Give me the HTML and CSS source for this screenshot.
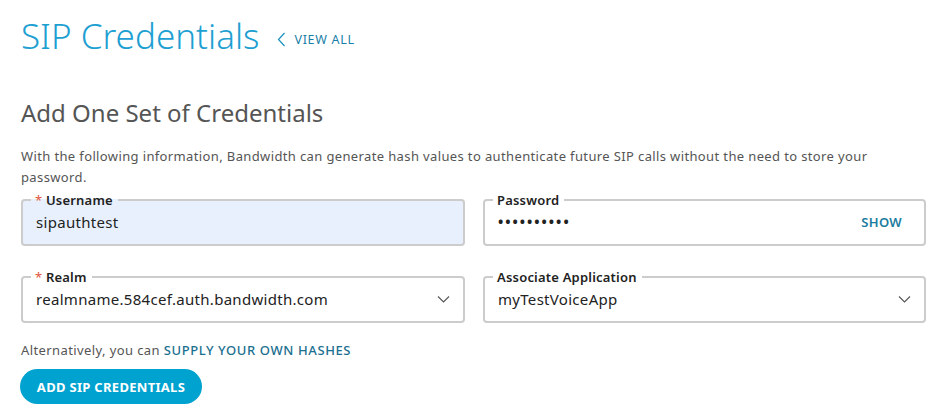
FILE: index.html
```html
<!DOCTYPE html>
<html>
<head>
<meta charset="utf-8">
<link rel="stylesheet" href="styles.css">
</head>
<body>
<div class="page">
  <header class="head">
    <h1 class="title">SIP Credentials</h1>
    <a class="back" href="#">
      <svg class="chev" width="9" height="15" viewBox="0 0 9 15"><path d="M7.5 1 L1.5 7.5 L7.5 14" fill="none" stroke="#1a8fbf" stroke-width="1.2"/></svg>
      <span>VIEW ALL</span>
    </a>
  </header>
  <h2 class="sub">Add One Set of Credentials</h2>
  <p class="desc">With the following information, Bandwidth can generate hash values to authenticate future SIP calls without the need to store your password.</p>
  <div class="grid">
    <fieldset class="field filled">
      <legend><span class="req">*</span> Username</legend>
      <div class="val">sipauthtest</div>
    </fieldset>
    <fieldset class="field">
      <legend>Password</legend>
      <div class="val row"><span class="dots">••••••••••</span><span class="show">SHOW</span></div>
    </fieldset>
    <fieldset class="field">
      <legend><span class="req">*</span> Realm</legend>
      <div class="val row"><span>realmname.584cef.auth.bandwidth.com</span>
        <svg class="caret" width="13" height="8" viewBox="0 0 13 8"><path d="M1 1.5 L6.5 7 L12 1.5" fill="none" stroke="#555" stroke-width="1.1"/></svg></div>
    </fieldset>
    <fieldset class="field">
      <legend>Associate Application</legend>
      <div class="val row"><span>myTestVoiceApp</span>
        <svg class="caret" width="13" height="8" viewBox="0 0 13 8"><path d="M1 1.5 L6.5 7 L12 1.5" fill="none" stroke="#555" stroke-width="1.1"/></svg></div>
    </fieldset>
  </div>
  <p class="alt">Alternatively, you can <a href="#" class="link">SUPPLY YOUR OWN HASHES</a></p>
  <button class="btn">ADD SIP CREDENTIALS</button>
</div>
</body>
</html>
```
FILE: styles.css
```css
* { box-sizing: border-box; }
body { margin: 0; background: #fff; font-family: "Noto Sans", "Open Sans", sans-serif; color: #555; }
.page { padding: 17px 5px 0 21px; }
.head { display: flex; align-items: baseline; gap: 18px; height: 38px; }
.title { margin: 0; font-weight: 300; font-size: 35px; color: #1e9fd2; line-height: 38px; }
.back { display: flex; align-items: center; gap: 8px; text-decoration: none; color: #1a7fa8; font-size: 12.5px; letter-spacing: 0.7px; position: relative; top: -2px; }
.sub { margin: 43px 0 0; font-weight: 400; font-size: 24px; line-height: 30px; color: #555; }
.desc { margin: 18px 0 0; font-size: 13px; line-height: 21px; color: #555; letter-spacing: 0.37px; max-width: 890px; }
.grid { display: grid; grid-template-columns: 444px 443px; column-gap: 18px; row-gap: 23px; margin-top: 4px; }
.field { margin: 0; border: 2px solid #ccc; border-radius: 4px; padding: 0 12px 0 13px; height: 54px; min-width: 0; }
.field.filled { background: #e8f0fe; }
.field legend { font-size: 13px; font-weight: 600; color: #222; padding: 0 5px 0 4px; margin-left: -5px; line-height: 16px; letter-spacing: 0.2px; }
.req { color: #e0553a; font-weight: 400; }
.val { font-size: 15px; color: #222; line-height: 20px; margin-top: 4px; letter-spacing: 0.3px; }
.row { display: flex; justify-content: space-between; align-items: center; }
.dots { letter-spacing: 2px; font-size: 14px; font-weight: 700; }
.show { font-size: 13px; font-weight: 600; color: #1b7ca0; letter-spacing: 0.3px; margin-right: 10px; }
.caret { margin-right: 1px; }
.alt { margin: 18px 0 0; font-size: 13px; line-height: 18px; color: #555; letter-spacing: 0.4px; }
.link { color: #1b6f8f; text-decoration: none; font-weight: 500; letter-spacing: 0.6px; }
.btn { display: block; margin: 10px 0 0 -1px; background: #00a2cf; color: #fff; border: 0; border-radius: 18px; height: 35px; width: 182px; padding: 0; font-family: inherit; font-weight: 700; font-size: 13px; letter-spacing: 0.3px; }
```
